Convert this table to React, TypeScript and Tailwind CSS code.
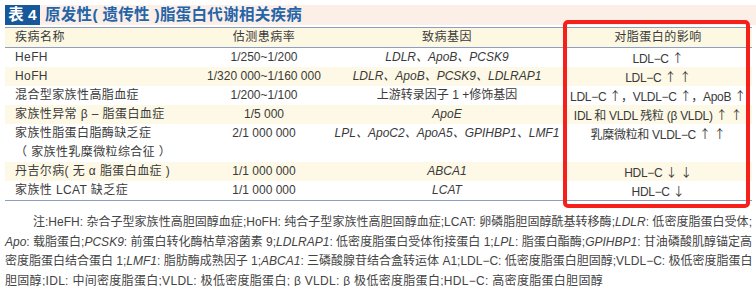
import React from 'react';

const font = { fontFamily: '"Liberation Sans", "Noto Sans CJK SC", sans-serif' };

// thin tall arrows as drawn by the CJK font
const Up = () => <span className="font-['Noto_Sans_CJK_SC'] text-[12px]">↑</span>;
const Down = () => <span className="font-['Noto_Sans_CJK_SC'] text-[12px]">↓</span>;

type Row = {
  name: React.ReactNode;
  rate: string;
  gene: React.ReactNode;
  effect: React.ReactNode;
  tall?: boolean;
};

const rows: Row[] = [
  { name: 'HeFH', rate: '1/250~1/200', gene: <i>LDLR、ApoB、PCSK9</i>, effect: <>LDL−C <Up /></> },
  { name: 'HoFH', rate: '1/320 000~1/160 000', gene: <i>LDLR、ApoB、PCSK9、LDLRAP1</i>, effect: <>LDL−C <Up /> <Up /></> },
  {
    name: '混合型家族性高脂血症',
    rate: '1/200~1/100',
    gene: '上游转录因子 1 +修饰基因',
    effect: <>LDL−C <Up />，VLDL−C <Up />，ApoB <Up /></>,
  },
  { name: '家族性异常 β – 脂蛋白血症', rate: '1/5 000', gene: <i>ApoE</i>, effect: <>IDL 和 VLDL 残粒 (β VLDL) <Up /> <Up /></> },
  {
    name: (
      <>
        <div>家族性脂蛋白脂酶缺乏症</div>
        <div>（ 家族性乳糜微粒综合征 ）</div>
      </>
    ),
    rate: '2/1 000 000',
    gene: <i>LPL、ApoC2、ApoA5、GPIHBP1、LMF1</i>,
    effect: <>乳糜微粒和 VLDL−C <Up /> <Up /></>,
    tall: true,
  },
  { name: '丹吉尔病( 无 α 脂蛋白血症 )', rate: '1/1 000 000', gene: <i>ABCA1</i>, effect: <>HDL−C <Down /> <Down /></> },
  { name: '家族性 LCAT 缺乏症', rate: '1/1 000 000', gene: <i>LCAT</i>, effect: <>HDL−C <Down /></> },
];

const cols = 'grid grid-cols-[193px_132px_234px_1fr]';

const App = () => {
  return (
    <div className="relative w-[756px] h-[286px] overflow-hidden bg-white text-[#3a3a3a]" style={font}>
      <div className="pt-[5px] pl-[5px]">
        {/* title */}
        <div className="flex h-[20px] items-center bg-[#fcefe8]">
          <div className="flex h-full w-[35px] items-center justify-center bg-[#17589a] text-[15.5px] font-bold text-white">
            表 4
          </div>
          <div className="pl-[5px] text-[15.5px] font-bold tracking-[0.3px] text-[#2465a8]">
            原发性( 遗传性 )脂蛋白代谢相关疾病
          </div>
        </div>

        {/* table */}
        <div className="mt-[2px] w-[747px] whitespace-nowrap text-[12px]">
          <div className={`${cols} h-[21px] items-center border-y border-[#8d9ec2] bg-[#fdf8e2] leading-[19px]`}>
            <div className="pl-[10px] tracking-[0.5px]">疾病名称</div>
            <div className="text-center tracking-[0.5px]">估测患病率</div>
            <div className="text-center tracking-[0.5px]">致病基因</div>
            <div className="text-center tracking-[0.5px]">对脂蛋白的影响</div>
          </div>
          {rows.map((r, i) => (
            <div
              key={i}
              className={`${cols} ${r.tall ? 'h-[38px]' : 'h-[19px]'} ${i % 2 === 1 ? 'bg-[#fdf9e6]' : 'bg-white'} leading-[19px]`}
            >
              <div className="pl-[10px] tracking-[0.4px]">{r.name}</div>
              <div className="text-center">{r.rate}</div>
              <div className="text-center">{r.gene}</div>
              <div className="text-center tracking-[-0.3px]">{r.effect}</div>
            </div>
          ))}
          <div className="h-px bg-[#8d9ec2]" />
        </div>

        {/* notes */}
        <div className="mt-[12px] w-[747px] whitespace-nowrap text-[12px] leading-[19.5px] text-[#444]">
          <div className="pl-[28px] [text-align-last:justify]">
            注:HeFH: 杂合子型家族性高胆固醇血症;HoFH: 纯合子型家族性高胆固醇血症;LCAT: 卵磷脂胆固醇酰基转移酶;<i>LDLR</i>: 低密度脂蛋白受体;
          </div>
          <div className="[text-align-last:justify]">
            <i>Apo</i>: 载脂蛋白;<i>PCSK9</i>: 前蛋白转化酶枯草溶菌素 9;<i>LDLRAP1</i>: 低密度脂蛋白受体衔接蛋白 1;<i>LPL</i>: 脂蛋白酯酶;<i>GPIHBP1</i>: 甘油磷酸肌醇锚定高
          </div>
          <div className="[text-align-last:justify]">
            密度脂蛋白结合蛋白 1;<i>LMF1</i>: 脂肪酶成熟因子 1;<i>ABCA1</i>: 三磷酸腺苷结合盒转运体 A1;LDL−C: 低密度脂蛋白胆固醇;VLDL−C: 极低密度脂蛋白
          </div>
          <div className="tracking-[0.3px]">胆固醇;IDL: 中间密度脂蛋白;VLDL: 极低密度脂蛋白; β VLDL: β 极低密度脂蛋白;HDL−C: 高密度脂蛋白胆固醇</div>
        </div>
      </div>

      {/* highlight box */}
      <div className="absolute left-[563px] top-[20px] h-[188px] w-[187px] rounded-[5px] border-[4px] border-[#f5201a]" />
    </div>
  );
};

export default App;
